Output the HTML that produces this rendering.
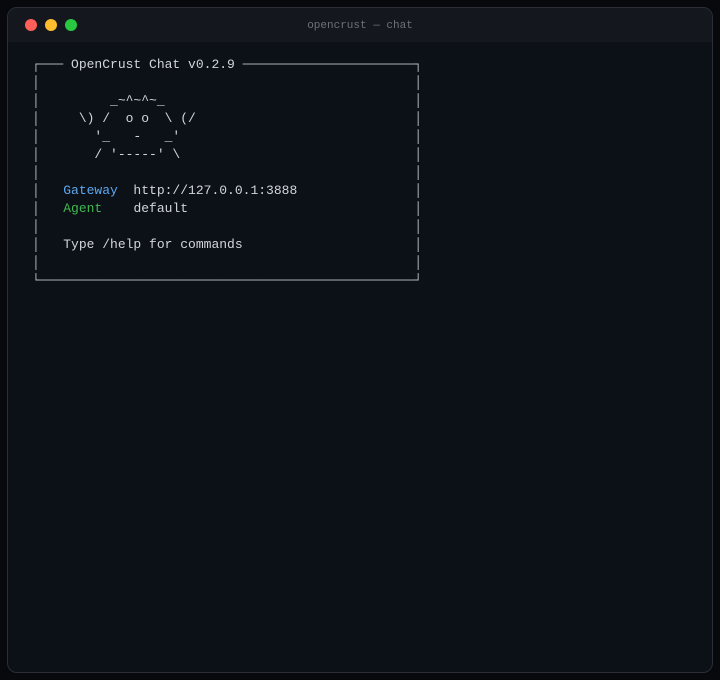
<!DOCTYPE html>
<html><head><meta charset="utf-8"><style>
html,body{margin:0;padding:0;background:#07090d;}
body{width:720px;height:680px;overflow:hidden;position:relative;}
.win{position:absolute;left:7px;top:7px;width:704px;height:664px;border:1px solid #2a2f38;border-radius:10px;background:#0c1017;overflow:hidden;}
.bar{position:absolute;left:0;top:0;right:0;height:34px;background:#14181e;}
.dot{position:absolute;top:11px;width:12px;height:12px;border-radius:50%;}
.title{position:absolute;left:0;right:0;top:12px;text-align:center;font:11px "Liberation Mono",monospace;color:#6b717a;}
pre{position:absolute;left:24px;top:48px;margin:0;font:13px/18px "Liberation Mono",monospace;color:#d2d6dc;}
.b{color:#b8bdc4}
.g{color:#5ea8f0}.a{color:#3fb950}
</style></head><body>
<div class="win">
<div class="bar">
<div class="dot" style="left:17px;background:#fe5f57"></div>
<div class="dot" style="left:37px;background:#febc2e"></div>
<div class="dot" style="left:57px;background:#28c840"></div>
<div class="title">opencrust — chat</div>
</div>
<pre><span class="b">┌───</span> OpenCrust Chat v0.2.9 <span class="b">──────────────────────┐</span>
<span class="b">│</span>                                                <span class="b">│</span>
<span class="b">│</span>         _~^~^~_                                <span class="b">│</span>
<span class="b">│</span>     \) /  o o  \ (/                            <span class="b">│</span>
<span class="b">│</span>       '_   -   _'                              <span class="b">│</span>
<span class="b">│</span>       / '-----' \                              <span class="b">│</span>
<span class="b">│</span>                                                <span class="b">│</span>
<span class="b">│</span>   <span class="g">Gateway</span>  http://127.0.0.1:3888               <span class="b">│</span>
<span class="b">│</span>   <span class="a">Agent</span>    default                             <span class="b">│</span>
<span class="b">│</span>                                                <span class="b">│</span>
<span class="b">│</span>   Type /help for commands                      <span class="b">│</span>
<span class="b">│</span>                                                <span class="b">│</span>
<span class="b">└────────────────────────────────────────────────┘</span></pre>
</div>
</body></html>
